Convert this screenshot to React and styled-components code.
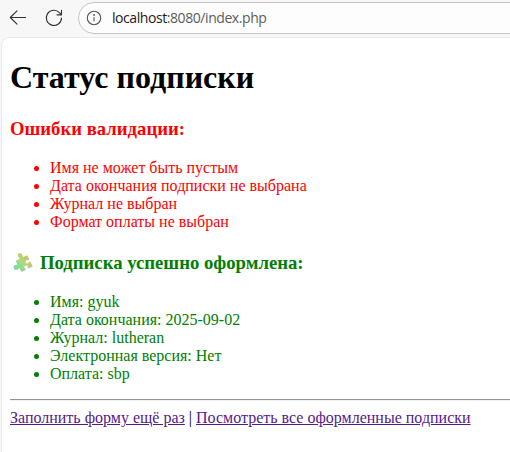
import React from "react";
import styled, { createGlobalStyle } from "styled-components";

const GlobalStyle = createGlobalStyle`
  * { box-sizing: border-box; }
  html, body { margin: 0; height: 100%; overflow: hidden; }
`;

const Browser = styled.div`
  width: 510px;
  height: 452px;
  overflow: hidden;
  display: flex;
  flex-direction: column;
  background: #f7f7f7;
`;

const Toolbar = styled.header`
  flex: none;
  height: 37px;
  display: flex;
  align-items: flex-start;
  padding: 2px 0 0 8px;
`;

const NavIcon = styled.svg`
  flex: none;
  width: 20px;
  height: 20px;
  margin: 6px ${(p) => p.$gap}px 0 0;
  fill: none;
  stroke: #333;
  stroke-width: 1.15;
  stroke-linecap: round;
  stroke-linejoin: round;
`;

const AddressBar = styled.div`
  flex: none;
  width: 460px;
  height: 32px;
  display: flex;
  align-items: center;
  padding-left: 7px;
  background: #fdfdfd;
  border: 1px solid #c6c6c6;
  border-radius: 16px;
`;

const InfoIcon = styled.svg`
  flex: none;
  width: 16px;
  height: 16px;
  margin-right: 10px;
  fill: none;
  stroke: #555;
  stroke-width: 1.1;
`;

const Url = styled.span`
  font: 14px/20px "Open Sans", sans-serif;
  letter-spacing: -0.43px;
  color: #5c5c5c;
  white-space: nowrap;
`;

const Host = styled.span`
  color: #1b1b1b;
`;

const Page = styled.main`
  flex: 1;
  width: 520px;
  margin-left: 1px;
  padding: 0 8px;
  background: #fff;
  border: 1px solid #e9e9e9;
  border-bottom: 0;
  border-radius: 9px 0 0 0;
  font: 16px/18px "Liberation Serif", "Times New Roman", serif;
  color: #000;
`;

const Title = styled.h1`
  margin: 21px 0 22px;
  font-size: 32px;
  line-height: 37px;
`;

const Subtitle = styled.h3`
  display: flex;
  align-items: center;
  margin: 0 0 19px;
  font-size: 18.72px;
  line-height: 22px;
  color: ${(p) => p.$color};
`;

const List = styled.ul`
  margin: 0 0 ${(p) => p.$after}px;
  padding-left: 40px;
  color: ${(p) => p.$color};
`;

const Puzzle = styled.svg`
  flex: none;
  width: 20px;
  height: 20px;
  margin: 0 8px 0 2px;
  overflow: visible;
`;

const Rule = styled.hr`
  margin: 0 0 8px;
  border: 0;
  border-top: 1px solid #949494;
  border-bottom: 1px solid #f0f0f0;
`;

const Link = styled.a`
  color: #551a8b;
  text-decoration: underline;
`;

const errors = [
  "Имя не может быть пустым",
  "Дата окончания подписки не выбрана",
  "Журнал не выбран",
  "Формат оплаты не выбран",
];

const details = [
  "Имя: gyuk",
  "Дата окончания: 2025-09-02",
  "Журнал: lutheran",
  "Электронная версия: Нет",
  "Оплата: sbp",
];

const piece =
  "M-4.5-5H-.3C.3-5.2-.6-6-.6-7A2 2 0 1 1 3-7C3-6 2.2-5.3 2.8-5H7V-1.2C6.6-.6 6-1.6 5-1.6A1.9 1.9 0 1 0 5 2C6 2 6.6 1 7 1.6V6H2.8C2.2 5.5 3 5 3 4A1.8 1.8 0 1 0-.6 4C-.6 5 .3 5.5-.3 6H-4.5V2C-4.8 1.3-5.6 2.2-6.6 2.2A2 2 0 1 1-6.6-1.6C-5.6-1.6-4.8-.7-4.5-1.3Z";

export default function App() {
  return (
    <Browser>
      <GlobalStyle />
      <Toolbar>
        <NavIcon viewBox="0 0 20 20" $gap={16}>
          <path d="M17.5 9.5H2.3M9 2.8 2.3 9.5 9 16.2" />
        </NavIcon>
        <NavIcon viewBox="0 0 20 20" $gap={14}>
          <path d="M17.5 10a7.6 7.6 0 1 1-2.1-5.4l2 2M17.5 2.3v4.5H13" />
        </NavIcon>
        <AddressBar>
          <InfoIcon viewBox="0 0 16 16">
            <circle cx="8" cy="8" r="6.7" />
            <path d="M8 7.2v4" />
            <circle cx="8" cy="5" r=".4" />
          </InfoIcon>
          <Url>
            <Host>localhost</Host>:8080/index.php
          </Url>
        </AddressBar>
      </Toolbar>
      <Page>
        <Title>Статус подписки</Title>
        <Subtitle $color="red">Ошибки валидации:</Subtitle>
        <List $color="red" $after={21}>
          {errors.map((t) => (
            <li key={t}>{t}</li>
          ))}
        </List>
        <Subtitle $color="green">
          <Puzzle viewBox="0 0 20 20">
            <defs>
              <linearGradient
                id="leaf"
                gradientUnits="userSpaceOnUse"
                x1="7"
                y1="0"
                x2="-6"
                y2="3"
              >
                <stop offset="0" stopColor="#cdc45a" />
                <stop offset=".5" stopColor="#a9dc78" />
                <stop offset="1" stopColor="#74e296" />
              </linearGradient>
            </defs>
            <path
              transform="translate(11.1 11.1) rotate(-27) scale(1.08)"
              fill="#c3b8d0"
              d={piece}
            />
            <path
              transform="translate(10.6 10.4) rotate(-27) scale(1.08)"
              fill="url(#leaf)"
              d={piece}
            />
          </Puzzle>
          Подписка успешно оформлена:
        </Subtitle>
        <List $color="green" $after={16}>
          {details.map((t) => (
            <li key={t}>{t}</li>
          ))}
        </List>
        <Rule />
        <Link href="#form">Заполнить форму ещё раз</Link> |{" "}
        <Link href="#all">Посмотреть все оформленные подписки</Link>
      </Page>
    </Browser>
  );
}
